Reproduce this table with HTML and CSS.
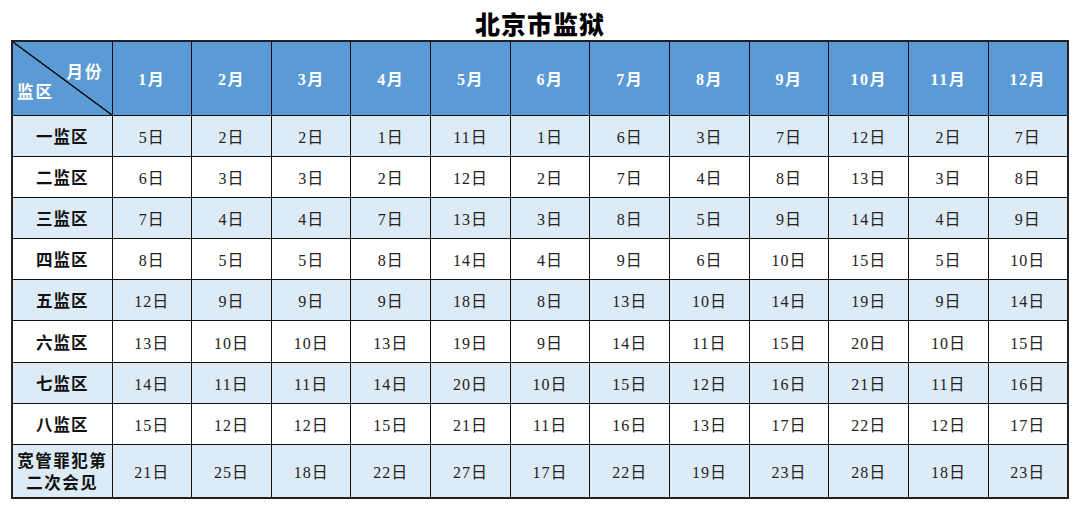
FILE: index.html
```html
<!DOCTYPE html>
<html lang="zh">
<head>
<meta charset="utf-8">
<title>北京市监狱</title>
<link rel="stylesheet" href="styles.css">
</head>
<body>
<h1 class="title">北京市监狱</h1>
<table class="sched">
<colgroup>
<col class="c-label">
<col class="c-m"><col class="c-m"><col class="c-m"><col class="c-m"><col class="c-m"><col class="c-m">
<col class="c-m"><col class="c-m"><col class="c-m"><col class="c-m"><col class="c-m"><col class="c-m">
</colgroup>
<thead>
<tr class="head">
<th class="diag"><div class="diag-in"><span class="d-top">月份</span><span class="d-bot">监区</span></div></th>
<th>1月</th><th>2月</th><th>3月</th><th>4月</th><th>5月</th><th>6月</th><th>7月</th><th>8月</th><th>9月</th><th>10月</th><th>11月</th><th>12月</th>
</tr>
</thead>
<tbody>
<tr class="alt"><th>一监区</th><td>5日</td><td>2日</td><td>2日</td><td>1日</td><td>11日</td><td>1日</td><td>6日</td><td>3日</td><td>7日</td><td>12日</td><td>2日</td><td>7日</td></tr>
<tr><th>二监区</th><td>6日</td><td>3日</td><td>3日</td><td>2日</td><td>12日</td><td>2日</td><td>7日</td><td>4日</td><td>8日</td><td>13日</td><td>3日</td><td>8日</td></tr>
<tr class="alt"><th>三监区</th><td>7日</td><td>4日</td><td>4日</td><td>7日</td><td>13日</td><td>3日</td><td>8日</td><td>5日</td><td>9日</td><td>14日</td><td>4日</td><td>9日</td></tr>
<tr><th>四监区</th><td>8日</td><td>5日</td><td>5日</td><td>8日</td><td>14日</td><td>4日</td><td>9日</td><td>6日</td><td>10日</td><td>15日</td><td>5日</td><td>10日</td></tr>
<tr class="alt"><th>五监区</th><td>12日</td><td>9日</td><td>9日</td><td>9日</td><td>18日</td><td>8日</td><td>13日</td><td>10日</td><td>14日</td><td>19日</td><td>9日</td><td>14日</td></tr>
<tr><th>六监区</th><td>13日</td><td>10日</td><td>10日</td><td>13日</td><td>19日</td><td>9日</td><td>14日</td><td>11日</td><td>15日</td><td>20日</td><td>10日</td><td>15日</td></tr>
<tr class="alt"><th>七监区</th><td>14日</td><td>11日</td><td>11日</td><td>14日</td><td>20日</td><td>10日</td><td>15日</td><td>12日</td><td>16日</td><td>21日</td><td>11日</td><td>16日</td></tr>
<tr><th>八监区</th><td>15日</td><td>12日</td><td>12日</td><td>15日</td><td>21日</td><td>11日</td><td>16日</td><td>13日</td><td>17日</td><td>22日</td><td>12日</td><td>17日</td></tr>
<tr class="alt last"><th class="two">宽管罪犯第<br>二次会见</th><td>21日</td><td>25日</td><td>18日</td><td>22日</td><td>27日</td><td>17日</td><td>22日</td><td>19日</td><td>23日</td><td>28日</td><td>18日</td><td>23日</td></tr>
</tbody>
</table>
</body>
</html>
```

FILE: styles.css
```css
html, body {
  margin: 0;
  padding: 0;
  background: #fff;
}
body {
  font-family: "Liberation Serif", "Noto Sans CJK SC", serif;
  color: #222;
}
.title {
  margin: 0;
  height: 40px;
  line-height: 46px;
  text-align: center;
  font-family: "Noto Sans CJK SC", sans-serif;
  font-weight: 900;
  font-size: 25px;
  letter-spacing: 1px;
  color: #000;
}
.sched {
  margin-left: 11px;
  width: 1058px;
  table-layout: fixed;
  border-collapse: collapse;
  border: 2px solid #222;
}
.c-label { width: 100px; }
.sched th, .sched td {
  border: 1.5px solid #111;
  padding: 0;
  text-align: center;
  vertical-align: middle;
}
.sched td {
  font-size: 16px;
  letter-spacing: 1px;
  font-weight: 400;
}
.sched tbody th {
  font-family: "Noto Sans CJK SC", sans-serif;
  font-size: 16.5px;
  font-weight: 700;
  letter-spacing: 1px;
  color: #111;
}
.sched tbody tr { height: 41.2px; }
.sched tbody tr.last { height: 53.5px; }
.sched tbody tr.alt { background: #ddebf7; }
.sched th.two {
  line-height: 22px;
  font-size: 16.5px;
  letter-spacing: 1.5px;
}
.head { height: 72.5px; background: #5b9bd5; }
.head th {
  color: #fff;
  font-size: 16px;
  font-weight: 700;
  letter-spacing: 1.5px;
}
.diag {
  background: linear-gradient(to top right, transparent calc(50% - 1px), #111 calc(50% - 0.5px), #111 calc(50% + 0.5px), transparent calc(50% + 1px));
}
.diag-in {
  height: 72.5px;
  box-sizing: border-box;
  padding: 5px 8px 0 4px;
  display: flex;
  flex-direction: column;
  justify-content: center;
  font-family: "Noto Sans CJK SC", sans-serif;
  font-size: 16.5px;
  line-height: 20px;
  letter-spacing: 2px;
}
.d-top { text-align: right; }
.d-bot { text-align: left; }
```
